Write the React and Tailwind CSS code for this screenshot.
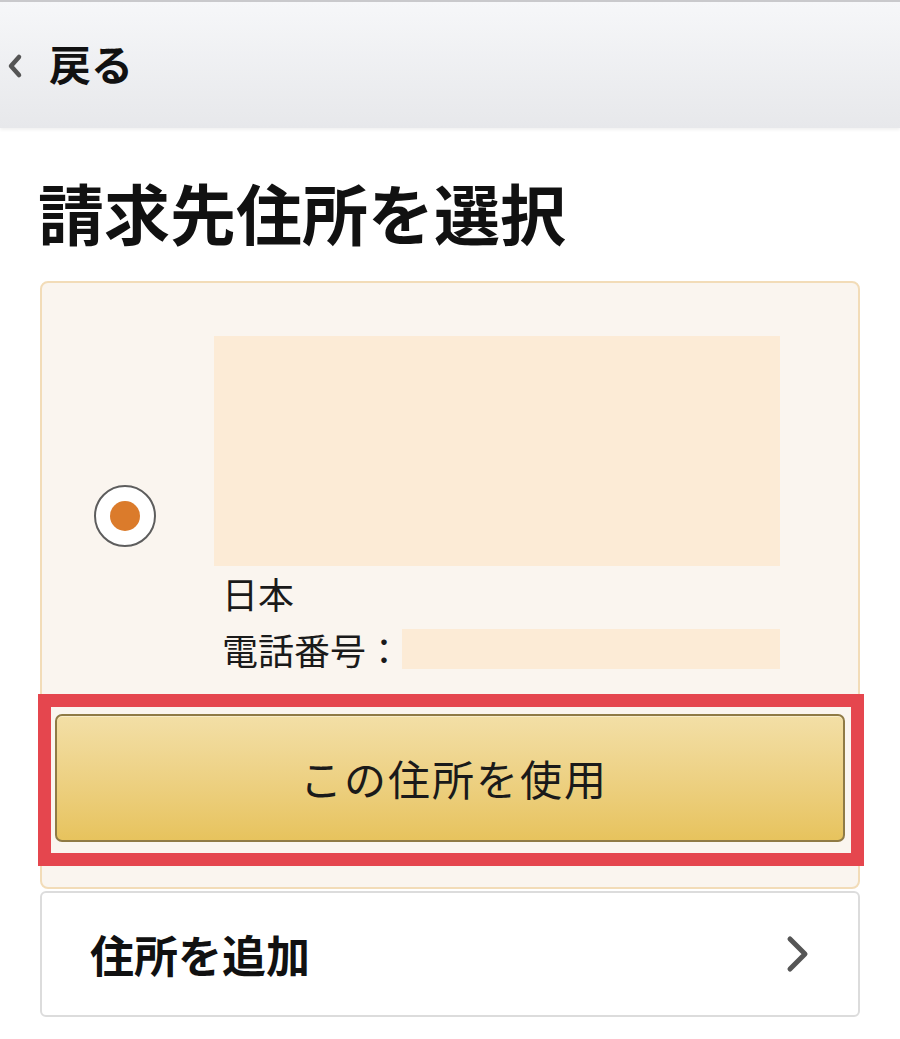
import React from "react";

const font = { fontFamily: '"Noto Sans CJK JP", "Noto Sans", sans-serif' };

export default function App() {
  return (
    <div className="w-[900px] h-[1039px] bg-white overflow-hidden relative" style={font}>
      {/* header */}
      <div className="h-[128px] border-t-2 border-[#c9c9cc] bg-gradient-to-b from-[#f6f7f9] to-[#e7e8eb] shadow-[0_2px_3px_rgba(0,0,0,0.06)] flex items-center pl-[6px]">
        <svg width="18" height="26" viewBox="0 0 18 26" className="mt-[2px]">
          <path d="M13 4 L5 13 L13 22" fill="none" stroke="#555" strokeWidth="4.5" strokeLinecap="round" strokeLinejoin="round" />
        </svg>
        <span className="ml-[25px] text-[42px] leading-none font-bold text-[#111] -mt-[4px]">戻る</span>
      </div>

      {/* title */}
      <h1 className="mt-[50px] ml-[38px] text-[66px] leading-none font-bold text-[#111]">請求先住所を選択</h1>

      {/* address card */}
      <div className="mt-[37px] mx-[40px] rounded-[8px] border-2 border-[#f2dcb8] bg-[#faf5ef] pt-[53px] pb-[21px]">
        <div className="flex">
          <div className="w-[172px] shrink-0">
            <div className="mt-[149px] ml-[52px] w-[62px] h-[62px] rounded-full border-2 border-[#5d5d5d] bg-white flex items-center justify-center">
              <div className="w-[30px] h-[30px] rounded-full bg-[#db7b2b]" />
            </div>
          </div>
          <div className="w-[566px]">
            <div className="h-[230px] bg-[#fcebd6]" />
            <div className="mt-[3px] ml-[8px] text-[36px] leading-[48px] text-[#1a1a1a]">日本</div>
            <div className="mt-[12px] flex items-center">
              <span className="ml-[8px] w-[180px] text-[36px] leading-[40px] text-[#1a1a1a]">電話番号：</span>
              <div className="h-[40px] flex-1 bg-[#fcebd6]" />
            </div>
          </div>
        </div>

        <div className="mt-[25px] -ml-[4px] -mr-[6px] border-[13px] border-[#e5464e] bg-[#faf5ef] pt-[7px] pb-[11px] pl-[4px] pr-[6px]">
          <div className="h-[128px] rounded-[7px] border-2 border-[#8f7a45] bg-gradient-to-b from-[#f3dfa6] to-[#e7c35d] flex items-center justify-center shadow-[inset_0_1px_0_rgba(255,255,255,0.4)]">
            <span className="text-[42px] leading-none text-[#1a1a1a] tracking-[2px] pl-[8px]">この住所を使用</span>
          </div>
        </div>
      </div>

      {/* add address */}
      <div className="mt-[2px] mx-[40px] h-[126px] rounded-[6px] border-2 border-[#dcdcdc] bg-white flex items-center justify-between pl-[48px] pr-[48px]">
        <span className="text-[44px] leading-none font-bold text-[#111]">住所を追加</span>
        <svg width="24" height="38" viewBox="0 0 24 38">
          <path d="M4 4 L19 19 L4 34" fill="none" stroke="#555" strokeWidth="5" strokeLinecap="round" strokeLinejoin="round" />
        </svg>
      </div>
    </div>
  );
}
